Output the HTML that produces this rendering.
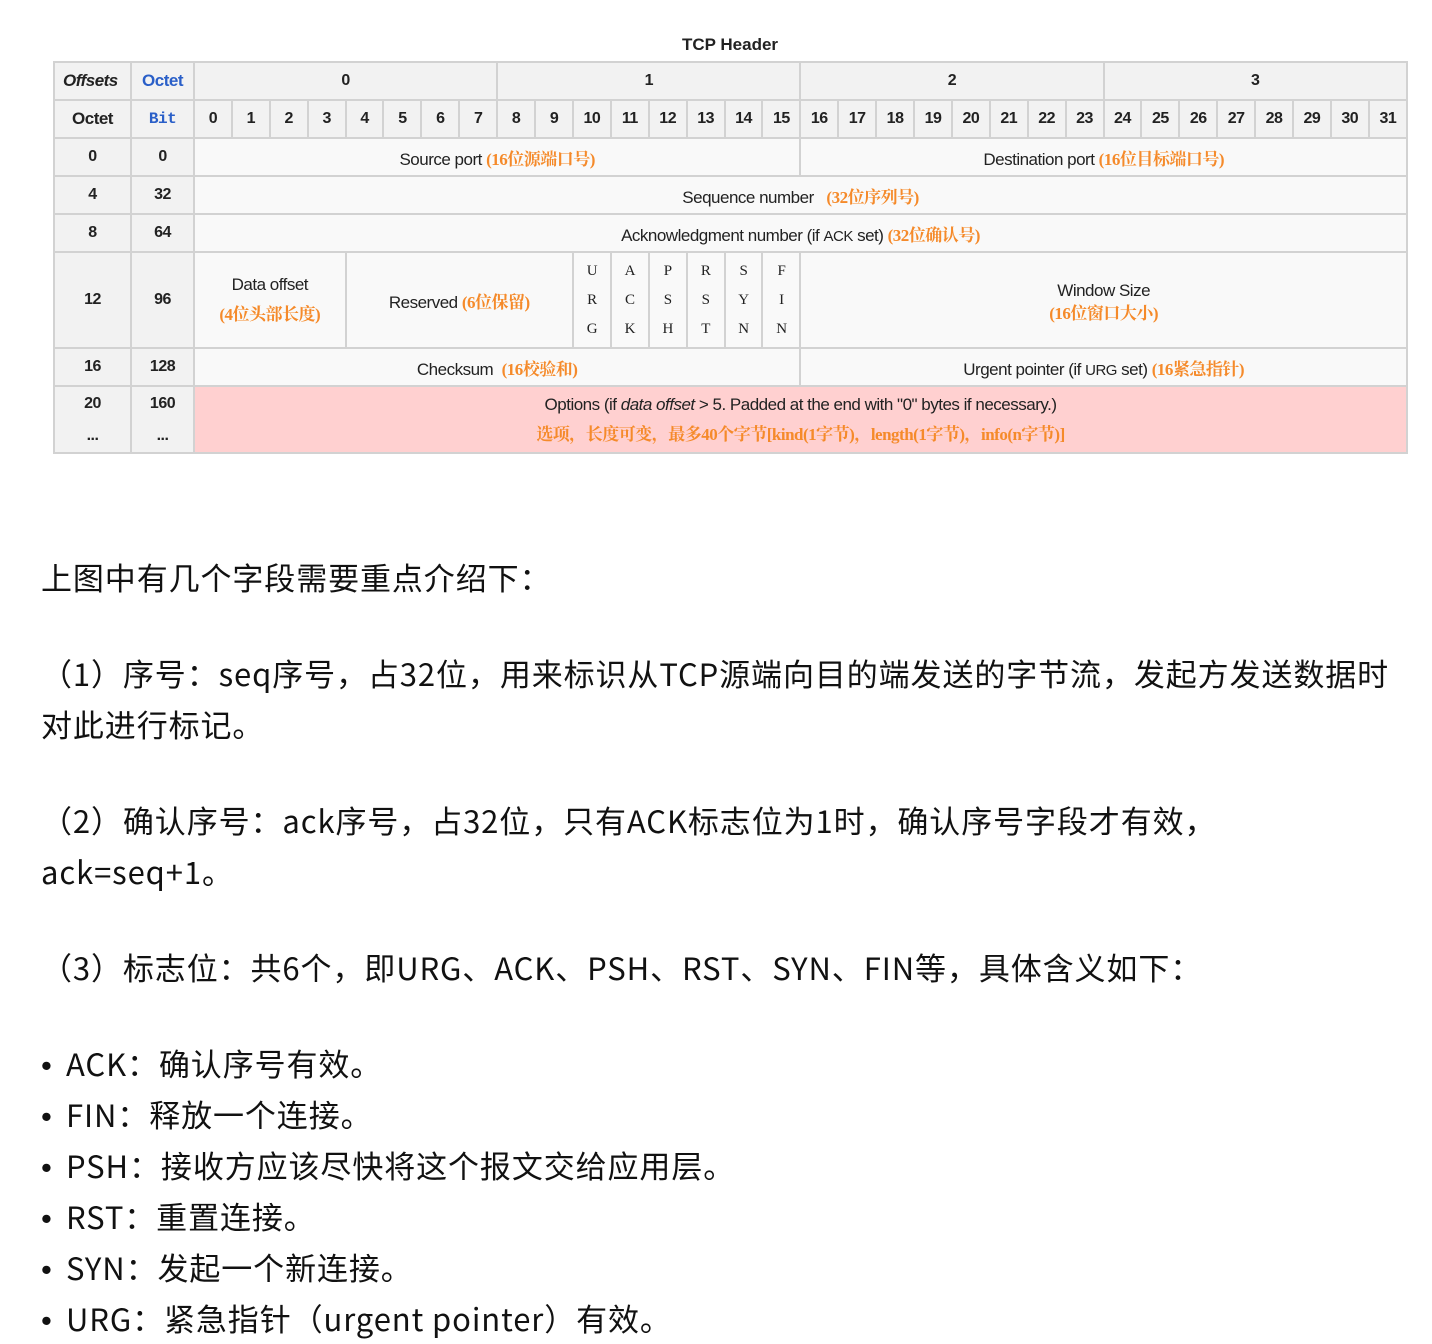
<!DOCTYPE html>
<html><head><meta charset="utf-8"><style>
*{margin:0;padding:0;box-sizing:border-box}
body{width:1432px;height:1344px;background:#fff;position:relative;overflow:hidden;font-family:"Liberation Sans","Noto Sans CJK SC",sans-serif}
.title{position:absolute;left:0;width:1460px;top:35px;text-align:center;font-size:17px;font-weight:bold;color:#222}
table{position:absolute;left:53px;top:61px;border-collapse:collapse;table-layout:fixed;width:1355px;font-size:17px;color:#222}
td{border:2px solid #d2d2d2;text-align:center;vertical-align:middle;background:#f9f9f9;padding:0;overflow:hidden;white-space:nowrap;letter-spacing:-0.5px}
td.h{background:#f2f2f2;font-weight:bold}
.m{font-weight:bold;font-size:16px}
.mono{font-family:"Liberation Mono",monospace;font-weight:bold;font-size:16px}
.b{color:#2a5fc8}
.o{color:#f58a2a;font-family:"Liberation Serif","Noto Serif CJK SC",serif;font-weight:bold}
.pink{background:#ffd0d0}
.fl{font-family:"Liberation Serif",serif;font-size:15px;line-height:29px}
.txt{position:absolute;left:41px;top:551px;font-family:"Noto Sans CJK SC",sans-serif;font-size:31px;color:#111;line-height:51px;white-space:nowrap;letter-spacing:0.9px}
.txt p{margin:0;height:51px;overflow:visible}
.gap{height:45px}
.bl{font-family:"Liberation Sans",sans-serif;display:inline-block;width:25px;line-height:1}
</style></head><body>
<div class="title">TCP Header</div>
<table>
<colgroup><col style="width:77px"><col style="width:63px">
<col span="32" style="width:37.9px"></colgroup>
<tr style="height:38px"><td class="h" style="text-align:left;padding-left:8px"><i>Offsets</i></td><td class="h b" style="border-bottom:none">Octet</td>
<td class="h m" colspan="8">0</td><td class="h m" colspan="8">1</td><td class="h m" colspan="8">2</td><td class="h m" colspan="8">3</td></tr>
<tr style="height:38px"><td class="h">Octet</td><td class="h mono b">Bit</td>
<td class="h m">0</td><td class="h m">1</td><td class="h m">2</td><td class="h m">3</td><td class="h m">4</td><td class="h m">5</td><td class="h m">6</td><td class="h m">7</td><td class="h m">8</td><td class="h m">9</td><td class="h m">10</td><td class="h m">11</td><td class="h m">12</td><td class="h m">13</td><td class="h m">14</td><td class="h m">15</td><td class="h m">16</td><td class="h m">17</td><td class="h m">18</td><td class="h m">19</td><td class="h m">20</td><td class="h m">21</td><td class="h m">22</td><td class="h m">23</td><td class="h m">24</td><td class="h m">25</td><td class="h m">26</td><td class="h m">27</td><td class="h m">28</td><td class="h m">29</td><td class="h m">30</td><td class="h m">31</td></tr>
<tr style="height:38px"><td class="h m">0</td><td class="h m">0</td><td colspan="16">Source port <span class="o">(16位源端口号)</span></td><td colspan="16">Destination port <span class="o">(16位目标端口号)</span></td></tr>
<tr style="height:38px"><td class="h m">4</td><td class="h m">32</td><td colspan="32">Sequence number &nbsp; <span class="o">(32位序列号)</span></td></tr>
<tr style="height:38px"><td class="h m">8</td><td class="h m">64</td><td colspan="32">Acknowledgment number (if <span style="font-size:15px">ACK</span> set) <span class="o">(32位确认号)</span></td></tr>
<tr style="height:96px"><td class="h m">12</td><td class="h m">96</td><td colspan="4" style="line-height:30px">Data offset<br><span class="o">(4位头部长度)</span></td><td colspan="6">Reserved <span class="o">(6位保留)</span></td>
<td class="fl">U<br>R<br>G</td><td class="fl">A<br>C<br>K</td><td class="fl">P<br>S<br>H</td><td class="fl">R<br>S<br>T</td><td class="fl">S<br>Y<br>N</td><td class="fl">F<br>I<br>N</td>
<td colspan="16" style="line-height:23px;padding-top:4px">Window Size<br><span class="o">(16位窗口大小)</span></td></tr>
<tr style="height:38px"><td class="h m">16</td><td class="h m">128</td><td colspan="16">Checksum &nbsp;<span class="o">(16校验和)</span></td><td colspan="16">Urgent pointer (if <span style="font-size:15px">URG</span> set) <span class="o">(16紧急指针)</span></td></tr>
<tr style="height:67px"><td class="h m" style="line-height:32px">20<br>...</td><td class="h m" style="line-height:32px">160<br>...</td><td colspan="32" class="pink" style="line-height:30px">Options (if <i>data offset</i> &gt; 5. Padded at the end with "0" bytes if necessary.)<br><span class="o">选项，长度可变，最多40个字节[kind(1字节)，length(1字节)，info(n字节)]</span></td></tr>
</table>
<div class="txt">
<p>上图中有几个字段需要重点介绍下：</p>
<div class="gap"></div>
<p>（1）序号：seq序号，占32位，用来标识从TCP源端向目的端发送的字节流，发起方发送数据时</p>
<p>对此进行标记。</p>
<div class="gap"></div>
<p>（2）确认序号：ack序号，占32位，只有ACK标志位为1时，确认序号字段才有效，</p>
<p>ack=seq+1。</p>
<div class="gap"></div>
<p>（3）标志位：共6个，即URG、ACK、PSH、RST、SYN、FIN等，具体含义如下：</p>
<div class="gap"></div>
<p><span class="bl">•</span>ACK：确认序号有效。</p>
<p><span class="bl">•</span>FIN：释放一个连接。</p>
<p><span class="bl">•</span>PSH：接收方应该尽快将这个报文交给应用层。</p>
<p><span class="bl">•</span>RST：重置连接。</p>
<p><span class="bl">•</span>SYN：发起一个新连接。</p>
<p><span class="bl">•</span>URG：紧急指针（urgent pointer）有效。</p>
</div>
</body></html>
